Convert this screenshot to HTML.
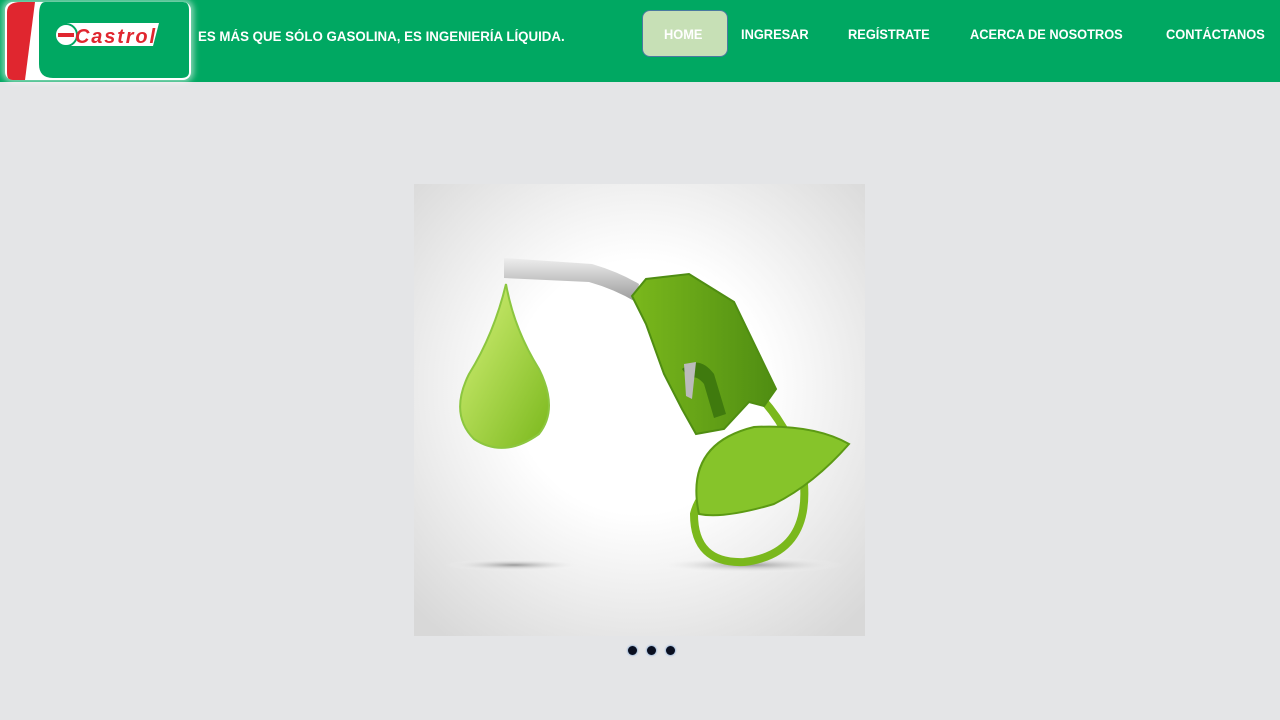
<!DOCTYPE html>
<html><head><meta charset="utf-8">
<style>
*{margin:0;padding:0;box-sizing:border-box}
body{width:1280px;height:720px;background:#e4e5e7;font-family:"Liberation Sans",sans-serif;position:relative;overflow:hidden}
.hdr{position:absolute;left:0;top:0;width:1280px;height:82px;background:#00a862}
.logo{position:absolute;left:5px;top:2px;width:186px;height:78px;border-radius:8px;box-shadow:0 0 6px 3px rgba(255,255,255,.5);overflow:hidden;background:#fff}
.tag{position:absolute;left:198px;top:29px;color:#fff;font-size:13.5px;font-weight:bold;white-space:nowrap;transform:scaleX(.985);transform-origin:left}
.nav a{position:absolute;top:27px;color:#fff;font-size:13.5px;font-weight:bold;text-decoration:none;white-space:nowrap;transform:scaleX(.95);transform-origin:left}
.home{position:absolute;left:642px;top:10px;width:86px;height:47px;background:#c7e0b6;border:1.5px solid #4a7aa0;border-radius:8px}
.dot{position:absolute;top:646px;width:9px;height:9px;border-radius:50%;background:#0a0f20;box-shadow:0 0 2px #3b78c0}
</style></head><body>
<div class="hdr">
 <div class="logo">
  <svg width="186" height="78">
   <path d="M16 0 H30 L20 78 H6 Q2 78 2 70 V10 Q2 0 16 0Z" fill="#e0262f"/>
   <path d="M40 0 H178 Q184 0 184 8 V70 Q184 76 176 76 H48 Q34 76 34 62 V14 Q34 0 40 0Z" fill="#00a862"/>
   <polygon points="62,21 154,21 148,44 56,44" fill="#fff"/>
   <circle cx="61" cy="33" r="11" fill="#fff" stroke="#00a862" stroke-width="2"/>
   <rect x="53" y="31" width="16" height="4" fill="#e0262f"/>
   <text x="70" y="41" font-family="Liberation Sans" font-weight="bold" font-style="italic" font-size="20" fill="#e0262f" textLength="80">Castrol</text>
  </svg>
 </div>
 <div class="tag">ES MÁS QUE SÓLO GASOLINA, ES INGENIERÍA LÍQUIDA.</div>
 <div class="home"></div>
 <div class="nav">
  <a style="left:664px">HOME</a>
  <a style="left:741px">INGRESAR</a>
  <a style="left:848px">REGÍSTRATE</a>
  <a style="left:970px">ACERCA DE NOSOTROS</a>
  <a style="left:1166px">CONTÁCTANOS</a>
 </div>
</div>
<svg style="position:absolute;left:414px;top:184px" width="451" height="452">
 <defs>
  <radialGradient id="bg" cx="50%" cy="45%" r="70%"><stop offset="40%" stop-color="#fff"/><stop offset="100%" stop-color="#d8d8d8"/></radialGradient>
  <linearGradient id="dr" x1="0" y1="0" x2="1" y2="1"><stop offset="0" stop-color="#d6f27a"/><stop offset="1" stop-color="#7ab81c"/></linearGradient>
  <linearGradient id="nz" x1="0" y1="0" x2="0" y2="1"><stop offset="0" stop-color="#eee"/><stop offset="1" stop-color="#999"/></linearGradient>
  <linearGradient id="gn" x1="0" y1="0" x2="1" y2="0"><stop offset="0" stop-color="#7ab81c"/><stop offset="1" stop-color="#4f8d12"/></linearGradient>
  <radialGradient id="sh"><stop offset="0" stop-color="#999"/><stop offset="1" stop-color="#fff" stop-opacity="0"/></radialGradient>
 </defs>
 <rect width="451" height="452" fill="url(#bg)"/>
 <ellipse cx="100" cy="381" rx="70" ry="6" fill="url(#sh)"/>
 <ellipse cx="335" cy="381" rx="95" ry="8" fill="url(#sh)"/>
 <path d="M92 100 Q80 150 55 190 Q35 230 60 255 Q90 275 125 250 Q145 225 125 185 Q100 145 92 100Z" fill="url(#dr)" stroke="#8cc63f" stroke-width="2"/>
 <path d="M90 74 L178 80 Q205 88 225 100 L222 118 Q200 105 175 98 L90 94Z" fill="url(#nz)"/>
 <path d="M348 215 Q380 250 390 300 Q395 370 330 378 Q280 380 280 330 Q285 310 300 305" fill="none" stroke="#7ab81c" stroke-width="8"/>
 <path d="M218 112 L232 95 L275 90 L320 118 L362 205 L350 222 L335 218 L310 245 L282 250 L268 225 L250 190 L232 140 Z" fill="url(#gn)" stroke="#4f8d12" stroke-width="2"/>
 <path d="M268 185 Q285 170 300 190 L312 230 L300 234 L290 200 Q282 190 275 195Z" fill="#3f7a0e"/>
 <path d="M270 180 L282 178 L278 215 L272 212Z" fill="#bbb"/>
 <path d="M285 330 Q270 260 340 243 Q400 240 435 260 Q400 300 360 320 Q310 335 285 330Z" fill="#86c42a" stroke="#5c9a14" stroke-width="2"/>
</svg>
<div class="dot" style="left:628px"></div>
<div class="dot" style="left:647px"></div>
<div class="dot" style="left:666px"></div>
</body></html>
